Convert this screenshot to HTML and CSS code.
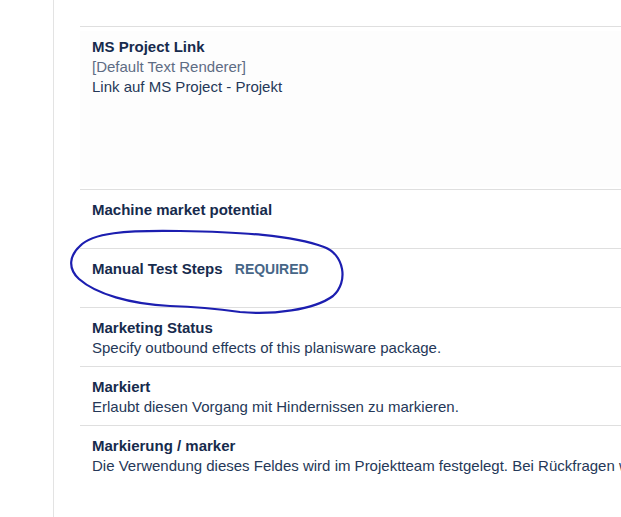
FILE: index.html
```html
<!DOCTYPE html>
<html lang="de">
<head>
<meta charset="utf-8">
<title>Fields</title>
<link rel="stylesheet" href="styles.css">
</head>
<body>
<div class="panel">
  <div class="list">
    <div class="row row-tall">
      <div class="hover">
        <div class="title">MS Project Link</div>
        <div class="renderer">[Default Text Renderer]</div>
        <div class="desc">Link auf MS Project - Projekt</div>
      </div>
    </div>
    <div class="row">
      <div class="title">Machine market potential</div>
      <div class="desc"></div>
    </div>
    <div class="row">
      <div class="title">Manual Test Steps <span class="req">REQUIRED</span></div>
      <div class="desc"></div>
    </div>
    <div class="row">
      <div class="title">Marketing Status</div>
      <div class="desc">Specify outbound effects of this planisware package.</div>
    </div>
    <div class="row">
      <div class="title">Markiert</div>
      <div class="desc">Erlaubt diesen Vorgang mit Hindernissen zu markieren.</div>
    </div>
    <div class="row">
      <div class="title">Markierung / marker</div>
      <div class="desc">Die Verwendung dieses Feldes wird im Projektteam festgelegt. Bei Rückfragen wenden Sie sich bitte an den Projektleiter.</div>
    </div>
  </div>
</div>
<svg class="scribble" width="621" height="517" viewBox="0 0 621 517">
  <path d="M 80 246 C 92 233, 125 230, 180 231 C 240 232, 292 235, 324 247 C 344 254, 349 282, 333 296 C 314 310, 272 315, 240 312 C 218 309, 200 307, 170 306 C 130 304, 96 294, 79 279 C 67 268, 70 255, 80 246" fill="none" stroke="#1c1eb0" stroke-width="2.2" stroke-linecap="round"/>
</svg>
</body>
</html>
```

FILE: styles.css
```css
html, body {
  margin: 0;
  padding: 0;
  background: #ffffff;
  overflow: hidden;
}
body {
  font-family: "Liberation Sans", Arial, sans-serif;
  font-size: 15px;
  line-height: 20px;
  color: #172b4d;
  width: 621px;
  height: 517px;
  position: relative;
}
.panel {
  margin-left: 53px;
  border-left: 1px solid #e3e3e3;
  height: 517px;
  padding-top: 26px;
  padding-left: 26px;
  box-sizing: border-box;
  overflow: hidden;
}
.list {
  white-space: nowrap;
}
.row {
  border-top: 1px solid #dfdfdf;
  padding: 10px 12px 8px 12px;
}
.row-tall {
  padding: 4px 0 2px 0;
}
.hover {
  background: #fdfdfd;
  padding: 6px 12px 0 12px;
  height: 150px;
}
.title {
  font-weight: bold;
  height: 20px;
}
.desc {
  height: 20px;
  color: #253858;
}
.renderer {
  color: #5e6c84;
}
.req {
  color: #476687;
  font-size: 14px;
  margin-left: 8px;
}
.scribble {
  position: absolute;
  left: 0;
  top: 0;
  pointer-events: none;
}
```
